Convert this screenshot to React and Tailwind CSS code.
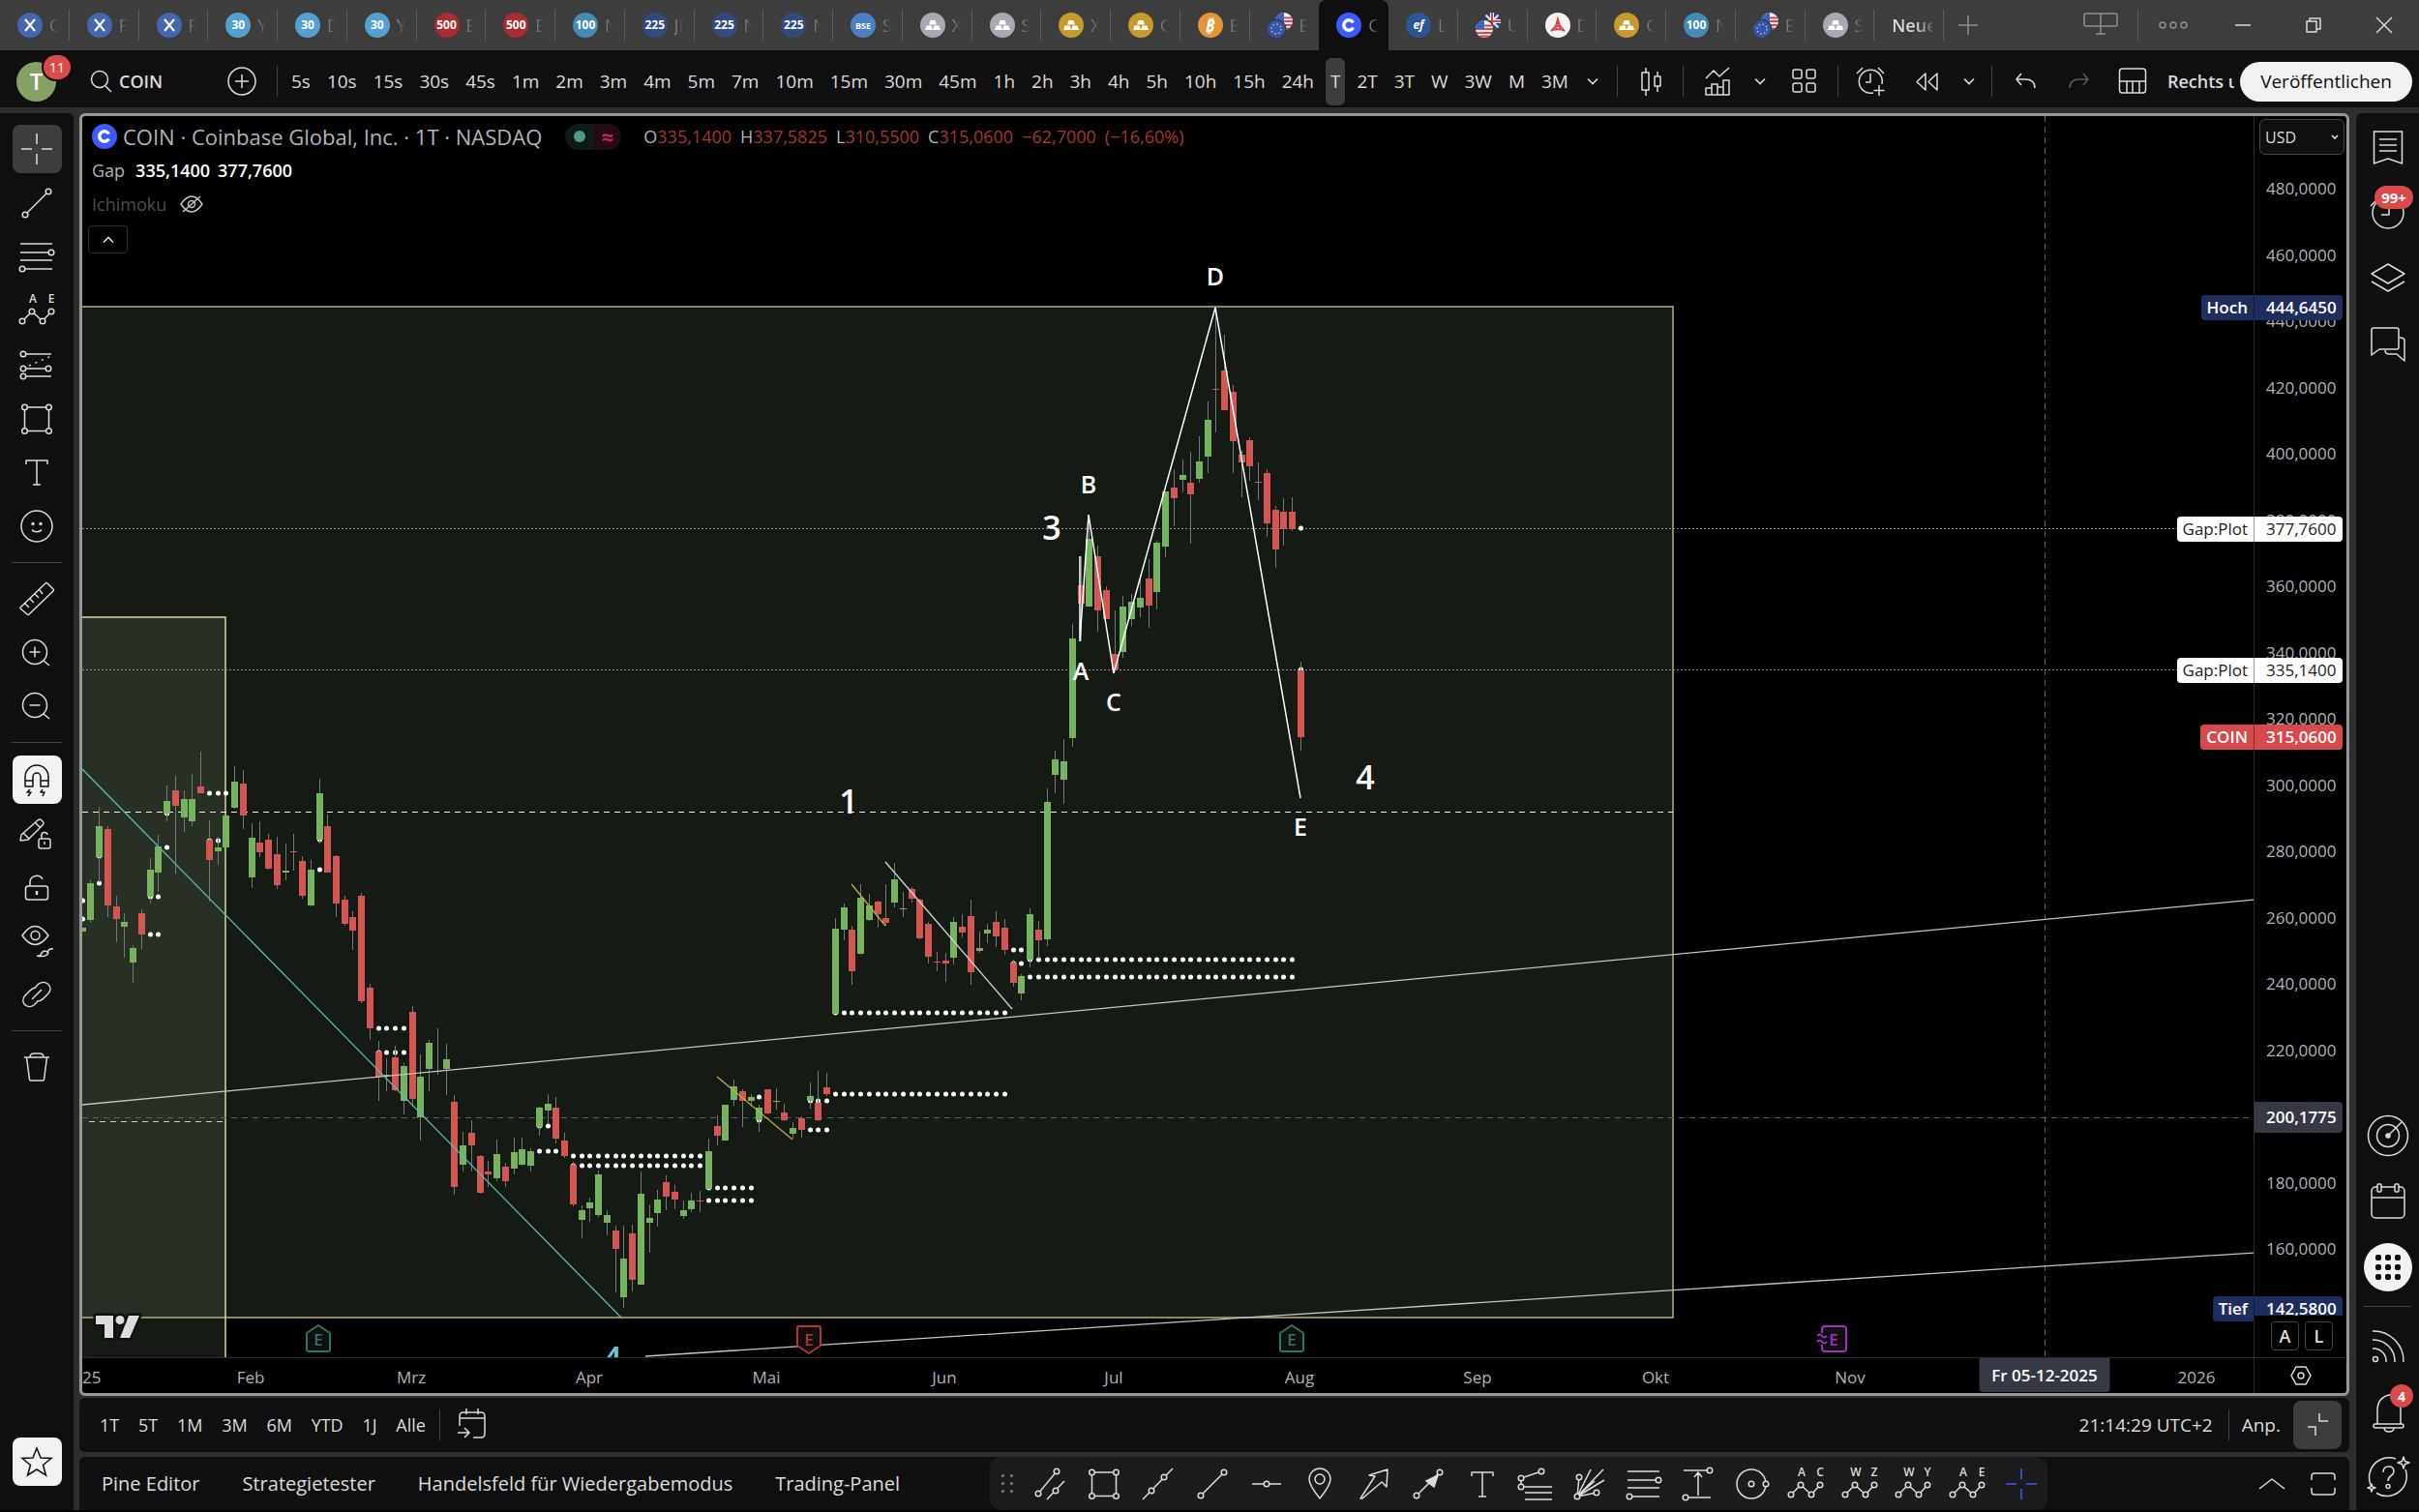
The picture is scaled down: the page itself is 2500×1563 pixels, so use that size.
import React from "react";

const tabs = [
  { icon: "x", label: "COIN" },
  { icon: "x", label: "FX" },
  { icon: "x", label: "FX" },
  { icon: "30", label: "YM" },
  { icon: "30", label: "DJI" },
  { icon: "30", label: "YM" },
  { icon: "500", label: "ES" },
  { icon: "500", label: "ES" },
  { icon: "100", label: "NQ" },
  { icon: "225", label: "JP" },
  { icon: "225", label: "NK" },
  { icon: "225", label: "NK" },
  { icon: "BSE", label: "SX" },
  { icon: "silver", label: "XAG" },
  { icon: "silver", label: "SI" },
  { icon: "gold", label: "XAU" },
  { icon: "gold", label: "GC" },
  { icon: "btc", label: "BTC" },
  { icon: "eu", label: "EUR" },
  { icon: "coin", label: "COIN", active: true },
  { icon: "ef", label: "LEU" },
  { icon: "uk", label: "USD" },
  { icon: "tri", label: "DX" },
  { icon: "gold", label: "GC" },
  { icon: "100", label: "NQ" },
  { icon: "eu", label: "EUR" },
  { icon: "silver", label: "SI" },
];

const intervals = [
  "5s", "10s", "15s", "30s", "45s", "1m", "2m", "3m", "4m", "5m", "7m", "10m", "15m", "30m", "45m",
  "1h", "2h", "3h", "4h", "5h", "10h", "15h", "24h", "T", "2T", "3T", "W", "3W", "M", "3M",
];

const ranges = ["1T", "5T", "1M", "3M", "6M", "YTD", "1J", "Alle"];

const months = [
  ["2025", 0], ["Feb", 174], ["Mrz", 340], ["Apr", 524], ["Mai", 707], ["Jun", 891], ["Jul", 1066],
  ["Aug", 1258], ["Sep", 1442], ["Okt", 1626], ["Nov", 1827], ["2026", 2185],
];

const ticks = [480, 460, 440, 420, 400, 380, 360, 340, 320, 300, 280, 260, 240, 220, 180, 160];

// price to pixels from the top of the plot
const priceY = (price) => Math.round(76 + (480 - price) * 3.426);
const barX = (i) => Math.round(93.4 + i * 8.745);

// Each block keeps its own origin and resolution: [high, top, bottom, low, rising]
const blocks = [
  {
    first: -1,
    origin: 740,
    scale: 2.3758,
    bars: [
      [520, 521, 529, 530, 1],
      [405, 411, 502, 509, 1], [223, 272, 346, 408, 1], [272, 279, 465, 495, 0], [442, 468, 500, 556, 0],
      [484, 507, 518, 595, 1], [564, 570, 606, 656, 1], [475, 485, 537, 572, 0], [349, 377, 445, 461, 1],
      [293, 321, 385, 432, 1], [170, 210, 240, 258, 1], [147, 184, 221, 387, 0], [182, 205, 250, 284, 1],
      [143, 205, 258, 270, 1], [87, 173, 190, 190, 0], [257, 304, 353, 455, 0], [296, 322, 332, 367, 1],
      [245, 245, 323, 323, 1], [124, 162, 226, 228, 1], [133, 166, 244, 277, 0], [263, 300, 396, 424, 1],
      [259, 312, 334, 347, 0], [289, 305, 376, 378, 0], [297, 340, 416, 426, 0], [314, 380, 385, 403, 1],
      [291, 333, 334, 379, 0], [345, 356, 443, 450, 0], [354, 377, 465, 469, 1], [154, 189, 305, 313, 1],
      [242, 271, 384, 384, 0], [342, 345, 461, 493, 0], [443, 452, 511, 516, 0], [479, 493, 527, 576, 0],
      [435, 442, 702, 705, 0], [658, 668, 768, 795, 0], [799, 824, 886, 945, 0], [840, 882, 884, 922, 1],
      [810, 839, 919, 922, 0], [852, 860, 945, 978, 1], [713, 726, 940, 960, 0], [832, 885, 985, 1043, 1],
      [797, 804, 866, 922, 1], [768, 871, 872, 881, 0], [806, 843, 866, 931, 1], [931, 947, 1156, 1175, 0],
      [1022, 1055, 1102, 1120, 1], [992, 1024, 1056, 1119, 0], [1078, 1081, 1172, 1174, 0], [1093, 1119, 1126, 1158, 0],
      [1041, 1076, 1135, 1142, 1], [1098, 1108, 1142, 1158, 0], [1037, 1072, 1112, 1126, 1], [1037, 1065, 1102, 1105, 1],
      [1062, 1069, 1105, 1119, 1], [961, 963, 1010, 1030, 1], [930, 953, 970, 1000, 1], [937, 963, 1038, 1050, 0],
      [1025, 1044, 1081, 1086, 0], [1095, 1103, 1200, 1205, 0], [1202, 1213, 1237, 1284, 1], [1183, 1194, 1209, 1243, 1],
      [1116, 1125, 1227, 1230, 1], [1215, 1225, 1244, 1275, 1], [1253, 1264, 1309, 1417, 0], [1252, 1333, 1428, 1453, 1],
      [1250, 1272, 1384, 1414, 0], [1118, 1174, 1396, 1397, 1], [1199, 1234, 1244, 1319, 1], [1165, 1187, 1221, 1254, 1],
      [1129, 1146, 1180, 1214, 0], [1152, 1169, 1187, 1212, 0],
    ],
  },
  {
    first: 70,
    origin: 780,
    scale: 3,
    bars: [
      [1384, 1412, 1430, 1440, 1], [1358, 1383, 1409, 1418, 1], [1353, 1383, 1385, 1420, 0], [1191, 1230, 1348, 1348, 1],
      [1118, 1151, 1182, 1212, 0], [1085, 1087, 1196, 1197, 1], [1007, 1028, 1070, 1089, 1], [1037, 1043, 1073, 1154, 0],
      [1052, 1063, 1073, 1092, 1], [1085, 1096, 1133, 1170, 1], [1037, 1039, 1114, 1116, 0], [1034, 1075, 1076, 1101, 1],
      [1083, 1110, 1134, 1138, 0], [1140, 1159, 1175, 1190, 1], [1122, 1128, 1164, 1187, 0], [1018, 1060, 1073, 1098, 1],
      [981, 1080, 1135, 1138, 0], [986, 1033, 1053, 1060, 0], [506, 541, 803, 803, 1], [462, 474, 543, 575, 1],
      [532, 544, 672, 713, 0], [403, 444, 617, 622, 1], [433, 469, 514, 515, 1], [453, 457, 496, 537, 0],
      [403, 506, 522, 530, 0], [337, 386, 458, 473, 1], [427, 477, 479, 505, 1], [410, 418, 446, 460, 0],
      [447, 451, 569, 572, 0], [519, 524, 626, 647, 0], [612, 643, 645, 671, 0], [615, 639, 649, 705, 0],
      [503, 520, 630, 651, 1], [494, 535, 551, 567, 0], [451, 500, 674, 713, 0], [549, 600, 608, 614, 1],
      [526, 544, 555, 586, 1], [486, 520, 563, 597, 0], [511, 538, 607, 622, 0], [636, 646, 707, 721, 0],
      [682, 688, 742, 763, 1], [477, 494, 637, 660, 1], [516, 544, 575, 634, 0], [105, 146, 572, 593, 1],
    ],
  },
  {
    first: 114,
    origin: 260,
    scale: 2.529,
    bars: [
      [1304, 1327, 1367, 1415, 1], [1274, 1332, 1382, 1444, 1], [973, 1011, 1273, 1294, 1], [797, 873, 921, 1020, 0],
      [690, 750, 927, 927, 1], [770, 796, 937, 993, 0], [875, 885, 962, 962, 0], [937, 1053, 1093, 1093, 0],
      [901, 927, 1048, 1062, 1], [896, 915, 962, 978, 1], [845, 905, 931, 956, 1], [803, 856, 925, 984, 0],
      [755, 760, 891, 936, 1], [628, 628, 772, 800, 1], [570, 618, 646, 718, 0], [544, 583, 598, 629, 1],
      [524, 605, 636, 765, 0], [482, 548, 594, 604, 1], [392, 440, 535, 580, 1], [150, 360, 361, 474, 0],
      [217, 312, 414, 414, 0], [350, 366, 495, 580, 0], [520, 532, 552, 642, 0], [486, 494, 561, 600, 0],
      [552, 603, 604, 650, 0], [570, 579, 711, 746, 0], [664, 675, 779, 827, 0], [646, 680, 727, 768, 0],
      [642, 680, 725, 731, 0], [1072, 1094, 1270, 1306, 0],
    ],
  },
];

// [first bar, last bar, y]
const gapDots = [
  [-1, -1, 931], [-1, -1, 950], [1, 1, 885], [1, 1, 913], [7, 8, 927], [7, 8, 966], [9, 9, 841], [9, 9, 876],
  [14, 16, 820], [14, 15, 869], [27, 27, 868], [27, 27, 899], [34, 37, 1063], [34, 37, 1088], [53, 54, 1164],
  [53, 55, 1190], [57, 72, 1195], [57, 72, 1205], [73, 78, 1228], [73, 78, 1241], [79, 79, 1134], [79, 79, 1158],
  [85, 87, 1138], [85, 87, 1168], [88, 108, 1131], [88, 108, 1047], [109, 110, 982], [109, 110, 996],
  [111, 142, 992], [111, 142, 1010], [143, 143, 546], [143, 143, 692],
];

function Icon({ children, className = "" }) {
  return (
    <svg
      viewBox="0 0 42 42"
      className={`size-[42px] shrink-0 overflow-visible ${className}`}
      stroke="currentColor"
      strokeWidth="1.5"
      aria-hidden="true"
    >
      {children}
    </svg>
  );
}

function P({ d, ...rest }) {
  return <path d={d} fill="none" strokeLinejoin="round" {...rest} />;
}

function Nodes({ at, r = 2.8 }) {
  return at.map(([x, y]) => <circle key={`${x}-${y}`} cx={x} cy={y} r={r} />);
}

function Wave({ a, b }) {
  return (
    <Icon>
      <text x="17" y="13" textAnchor="middle" stroke="none" className="fill-[#dbdbdb] text-[12px] font-semibold">{a}</text>
      <text x="36" y="13" textAnchor="middle" stroke="none" className="fill-[#dbdbdb] text-[12px] font-semibold">{b}</text>
      <P d="M6 32L16 22L27 32L36 22" />
      <Nodes at={[[6, 32], [16, 22], [27, 32], [36, 22]]} />
    </Icon>
  );
}

const Chevron = () => (
  <svg viewBox="0 0 12 8" className="w-3 h-2" fill="none" stroke="currentColor" strokeWidth="1.6" aria-hidden="true">
    <path d="M1 1.5l5 5 5-5" />
  </svg>
);

const CrossIcon = () => <Icon><P d="M21 5v11M21 26v11M5 21h11M26 21h11" /></Icon>;
const LineIcon = () => <Icon><P d="M9 33L33 9" /><Nodes at={[[9, 33], [33, 9]]} /></Icon>;
const FibIcon = () => (
  <Icon>
    <P d="M4 8h33M4 17h33M4 25h33M4 34h33" />
    <Nodes at={[[36, 17], [6, 34]]} />
  </Icon>
);
const ForecastIcon = () => (
  <Icon>
    <P d="M7 10h29M7 25h26M7 33h29" />
    <P d="M13 22L36 12" strokeDasharray="2 5" />
    <Nodes at={[[7, 10], [7, 25], [33, 25], [7, 33]]} />
  </Icon>
);
const RectIcon = () => (
  <Icon>
    <P d="M8.500 9h25v24.500h-25z" />
    <Nodes at={[[8.5, 9], [33.5, 9], [33.5, 33.5], [8.5, 33.5]]} />
  </Icon>
);
const TextIcon = () => <Icon><P d="M10 13V9h22v4M21 9v25M17 34h8" /></Icon>;

const drawTools = [
  { name: "Fadenkreuz", icon: <CrossIcon />, selected: true },
  { name: "Trendlinie", icon: <LineIcon /> },
  { name: "Fibonacci", icon: <FibIcon /> },
  { name: "Muster", icon: <Wave a="A" b="E" /> },
  { name: "Prognose", icon: <ForecastIcon /> },
  { name: "Rechteck", icon: <RectIcon /> },
  { name: "Text", icon: <TextIcon /> },
  {
    name: "Symbole",
    icon: (
      <Icon>
        <circle cx="21" cy="21" r="16" />
        <circle cx="17" cy="18.500" r="1" fill="currentColor" />
        <circle cx="25" cy="18.500" r="1" fill="currentColor" />
        <P d="M16 24.500c2 3 8 3 10 0" />
      </Icon>
    ),
  },
];

const zoomTools = [
  {
    name: "Messen",
    icon: <Icon><P d="M4 30L30 5q1-1 2 0l6 6q1 1 0 2L13 37q-1 1-2 0l-7-6zM9 26l4 4M14 21l4 4M19 16l4 4M24 12l3 4" /></Icon>,
  },
  { name: "Vergrößern", icon: <Icon><circle cx="19" cy="21" r="12.500" /><P d="M28 30l6 5M19 15.500v11M13.500 21h11" /></Icon> },
  { name: "Verkleinern", icon: <Icon><circle cx="19" cy="21" r="12.500" /><P d="M28 30l6 5M13.500 21h11" /></Icon> },
];

const modeTools = [
  {
    name: "Magnet",
    lit: true,
    icon: (
      <Icon>
        <P d="M9 28V18a12 12 0 0 1 24 0v10h-8V18a4 4 0 0 0-8 0v10zM9 22h8M25 22h8M14 31l-3 3h4l-3 4M27 31l-2 3h4l-2 4" />
      </Icon>
    ),
  },
  {
    name: "Zeichenmodus",
    icon: (
      <Icon>
        <P d="M5 22L22 7q2-2 4 0l1 1q2 2 0 4L12 27l-8 1zM19 9l6 6M7 20l6 6" />
        <rect x="23" y="26" width="12" height="10" rx="2" />
        <P d="M26 26v-3a3 3 0 0 1 6-1M29 29v3" />
      </Icon>
    ),
  },
  { name: "Sperren", icon: <Icon><rect x="9.500" y="20" width="23" height="14" rx="2.500" /><P d="M14 20v-5a7 7 0 0 1 13-2" /><P d="M21 25v4" strokeWidth="2.500" /></Icon> },
  {
    name: "Ausblenden",
    icon: (
      <Icon>
        <P d="M6 15q13-19 27 0q-14 19-27 0z" />
        <circle cx="19.500" cy="15" r="4.500" />
        <P d="M21 36q4 1 5-3q3-4 7 0q-2 5-12 3M32 32q2-4 6-3" />
      </Icon>
    ),
  },
  {
    name: "Verknüpfen",
    icon: (
      <Icon>
        <P d="M19 14l4-4c7-5 16 3 10 10l-5 5q-3 3-7 3M22 28l-4 4c-7 5-15-3-9-10l5-5q3-3 6-3M16 26L26 16" />
      </Icon>
    ),
  },
];

const favorites = [
  { name: "Paralleler Kanal", icon: <Icon><P d="M8 31L27 8M17 37L35 18" /><Nodes at={[[8, 31], [27, 8], [26, 28]]} /></Icon> },
  { name: "Rechteck", icon: <RectIcon /> },
  { name: "Erweiterte Linie", icon: <Icon><P d="M5 37L36 5" /><Nodes at={[[14, 28], [27, 14]]} /></Icon> },
  { name: "Trendlinie", icon: <LineIcon /> },
  { name: "Horizontale Linie", icon: <Icon><P d="M6 21h30" /><Nodes at={[[21, 21]]} /></Icon> },
  { name: "Notiz", icon: <Icon><P d="M21 36C13 26 10 21 10 16a11 11 0 0 1 22 0c0 5-3 10-11 20z" /><circle cx="21" cy="16" r="5" /></Icon> },
  { name: "Pfeil", icon: <Icon><P d="M7 36L22 13l-6-1L35 6l-1 18-5-5L9 36z" /></Icon> },
  { name: "Pfeillinie", icon: <Icon><P d="M9 33L33 9" /><path d="M31 12l-4 12-8-6z" fill="currentColor" /><Nodes at={[[9, 33], [33, 9]]} /></Icon> },
  { name: "Text", icon: <TextIcon /> },
  { name: "Fib-Erweiterung", icon: <Icon><P d="M6 15L27 8M6 15v9M6 24h32M10 30h28M10 37h28" /><Nodes at={[[27, 8], [6, 15], [6, 24]]} /></Icon> },
  { name: "Fib-Fächer", icon: <Icon><P d="M8 34L10 14M8 34L22 6M8 34L35 6M8 34L36 17M8 34l20-4M8 34l18-16" /><Nodes at={[[8, 34], [10, 14], [28, 30]]} /></Icon> },
  { name: "Fibonacci", icon: <FibIcon /> },
  { name: "Preisspanne", icon: <Icon><P d="M6 7h26M8 35h26M21 33V10M17 14l4-5 4 5" /><Nodes at={[[33, 7], [8, 35]]} /></Icon> },
  { name: "Kreis", icon: <Icon><circle cx="21" cy="21" r="15" /><Nodes at={[[21, 21], [36, 21]]} /></Icon> },
  { name: "Elliott ABC", icon: <Wave a="A" b="C" /> },
  { name: "Elliott WXYXZ", icon: <Wave a="W" b="Z" /> },
  { name: "Elliott WXY", icon: <Wave a="W" b="Y" /> },
  { name: "Elliott ABCDE", icon: <Wave a="A" b="E" /> },
];

const chips = {
  x: "bg-[#4467ad]",
  30: "bg-[#54a0d3]",
  500: "bg-[#a92c31]",
  100: "bg-[#468bb5]",
  225: "bg-[#2f4b80]",
  BSE: "bg-[#4c7fc4]",
  silver: "bg-[#a9a9b4]",
  gold: "bg-[#c79a2c]",
  btc: "bg-[#e39537]",
  coin: "bg-[#3d5afe]",
  ef: "bg-[#2c5796]",
  tri: "bg-[#f2f2f2]",
};

function PairIcon({ kind }) {
  const union = (
    <g>
      <circle r="9" fill="#2f55b8" />
      <circle r="5" fill="none" stroke="#e8c63c" strokeWidth="1.5" strokeDasharray="1.5 2.4" />
    </g>
  );
  const states = (
    <g>
      <circle r="9" fill="#f1f1f1" />
      <path d="M-8-3.500H8M-9 0H9M-8 4H8M-5 7.500H5" stroke="#d64a52" strokeWidth="1.800" />
      <path d="M0 0V-9A9 9 0 0 0-9 0z" fill="#3b63c9" />
    </g>
  );
  const kingdom = (
    <g>
      <circle r="9" fill="#2b4698" />
      <path d="M-6.500-6.500L6.500 6.500M6.500-6.500L-6.500 6.500" stroke="#e9e9e9" strokeWidth="2" />
      <path d="M0-9V9M-9 0H9" stroke="#f1f1f1" strokeWidth="4" />
      <path d="M0-9V9M-9 0H9" stroke="#d0434b" strokeWidth="2" />
    </g>
  );
  return (
    <svg viewBox="0 0 26 26" className="size-[26px] shrink-0" aria-hidden="true">
      <g transform="translate(17 9)">{kind === "eu" ? states : kingdom}</g>
      <circle cx="9" cy="17" r="10.500" fill="#3d3d3d" />
      <g transform="translate(9 17)">{kind === "eu" ? union : states}</g>
    </svg>
  );
}

function Chip({ icon }) {
  if (icon === "eu" || icon === "uk") return <PairIcon kind={icon} />;
  return (
    <span className={`flex size-[26px] shrink-0 items-center justify-center rounded-full text-white ${chips[icon]}`}>
      {(icon === "silver" || icon === "gold") && (
        <svg viewBox="0 0 26 26" className="size-[26px]" fill="#fff" aria-hidden="true">
          <path d="M10.500 8h5l1.500 4.500H9zM6.500 13.500h5l1.500 4.500H5zM14.500 13.500h5l1.500 4.500h-8z" />
        </svg>
      )}
      {icon === "x" && (
        <svg viewBox="0 0 26 26" className="size-[26px]" stroke="#fff" strokeWidth="2" fill="none" aria-hidden="true">
          <path d="M8 7l10 12M18 7L8 19" />
        </svg>
      )}
      {icon === "coin" && (
        <svg viewBox="0 0 26 26" className="size-[26px]" stroke="#fff" strokeWidth="3.500" fill="none" aria-hidden="true">
          <path d="M17.500 10.500a5.200 5.200 0 1 0 0 5" />
        </svg>
      )}
      {icon === "tri" && (
        <svg viewBox="0 0 26 26" className="size-[26px]" stroke="#d0484c" strokeWidth="1.500" fill="none" aria-hidden="true">
          <path d="M13 6l2 7 5 6q-7-3-14 0l5-6zM13 6v7l-3 4h6l-3-4" />
        </svg>
      )}
      {icon === "btc" && <span className="text-[17px] font-bold italic leading-none">₿</span>}
      {icon === "ef" && <span className="text-[12px] font-bold italic leading-none">ef</span>}
      {icon === "BSE" && <span className="text-[9px] font-bold leading-none">BSE</span>}
      {icon === "30" && <span className="text-[12px] font-bold leading-none">30</span>}
      {["500", "100", "225"].includes(icon) && <span className="text-[12px] font-bold leading-none">{icon}</span>}
    </span>
  );
}

function TabBar() {
  return (
    <header className="flex h-[52px] shrink-0 bg-[#3d3d3d]">
      <nav className="flex min-w-0 flex-1" aria-label="Tabs">
        {tabs.map((tab, i) => (
          <a
            key={i}
            href="#"
            className={`relative flex min-w-0 flex-1 items-center gap-[7px] pl-[18px] pr-3 ${tab.active ? "rounded-t-lg bg-[#0f0f0f]" : ""}`}
          >
            <Chip icon={tab.icon} />
            <span className="min-w-0 overflow-hidden whitespace-nowrap bg-gradient-to-r from-[#8f8f8f] to-[#3d3d3d] bg-clip-text text-[18px] text-transparent">
              {tab.label}
            </span>
            {!tab.active && !(tabs[i + 1] && tabs[i + 1].active) && (
              <span className="absolute right-0 top-[10px] h-8 w-px bg-[#5c5c5c]" />
            )}
          </a>
        ))}
        <a href="#" className="relative flex min-w-0 flex-1 items-center pl-[18px] pr-3">
          <span className="overflow-hidden whitespace-nowrap bg-gradient-to-r from-[#dbdbdb] from-60% to-[#5c5c5c] bg-clip-text text-[18px] font-semibold text-transparent">
            Neuer Tab
          </span>
          <span className="absolute right-0 top-[10px] h-8 w-px bg-[#5c5c5c]" />
        </a>
      </nav>
      <div className="flex w-[491px] shrink-0 items-center text-[#8f8f8f]">
        <button aria-label="Neuer Tab" className="flex w-[50px] justify-center">
          <Icon><P d="M21 11v20M11 21h20" /></Icon>
        </button>
        <button aria-label="Bildschirme" className="ml-[74px] flex w-[76px] justify-center">
          <Icon><rect x="4" y="9" width="34" height="13" rx="2" fill="none" /><P d="M21 9v21M16 30h10" /></Icon>
        </button>
        <span className="h-8 w-px bg-[#5c5c5c]" />
        <button aria-label="Menü" className="flex flex-1 justify-center">
          <Icon><g fill="none"><circle cx="10" cy="21" r="3" /><circle cx="21" cy="21" r="3" /><circle cx="32" cy="21" r="3" /></g></Icon>
        </button>
        <button aria-label="Minimieren" className="flex w-[73px] justify-center text-[#dbdbdb]">
          <Icon><P d="M13 21h16" /></Icon>
        </button>
        <button aria-label="Verkleinern" className="flex w-[73px] justify-center text-[#dbdbdb]">
          <Icon><P d="M14 17h10v11H14zM17 17v-3h11v11h-4" /></Icon>
        </button>
        <button aria-label="Schließen" className="flex w-[73px] justify-center text-[#dbdbdb]">
          <Icon><P d="M13 13l16 16M29 13L13 29" /></Icon>
        </button>
      </div>
    </header>
  );
}

const Bar = () => <span className="h-8 w-px shrink-0 bg-[#434343]" />;

function Toolbar() {
  return (
    <div className="flex h-[59px] shrink-0 items-center bg-[#0f0f0f] fill-[#0f0f0f] pt-[5px] text-[19px] text-[#dbdbdb]">
      <div className="flex w-[296px] shrink-0 items-center">
        <button aria-label="Profil" className="relative ml-[17px] flex size-[41px] items-center justify-center rounded-full bg-[#85a165] text-[24px] font-semibold text-white">
          T
          <span className="absolute -right-[15px] -top-[7px] flex h-[25px] w-[28px] items-center justify-center rounded-full bg-[#da4a4a] text-[14px] font-medium ring-2 ring-[#0f0f0f]">
            11
          </span>
        </button>
        <button className="ml-[25px] flex w-[146px] items-center font-semibold">
          <Icon><circle cx="20" cy="19" r="8.500" /><P d="M26 26l6 6" /></Icon>
          <span className="-ml-[2px] text-[18px]">COIN</span>
        </button>
        <button aria-label="Symbol hinzufügen">
          <Icon><circle cx="21" cy="21" r="14" /><P d="M21 14v14M14 21h14" /></Icon>
        </button>
        <span className="flex-1" />
        <Bar />
        <span className="w-[9px]" />
      </div>
      <div className="flex min-w-0 flex-1 items-center justify-between">
        {intervals.map((label) => (
          <button
            key={label}
            className={`h-[49px] rounded-md px-[5px] ${label === "T" ? "bg-[#3d3d3d]" : ""}`}
          >
            {label}
          </button>
        ))}
      </div>
      <div className="flex shrink-0 items-center">
        <button aria-label="Intervalle" className="mr-[5px] flex w-10 justify-center"><Chevron /></button>
        <Bar />
        <button aria-label="Kerzen" className="flex w-[67px] justify-center">
          <Icon><P d="M16 7v5M16 30v6M12 12h7v18h-7zM28 11v5M28 26v6M25 16h6v10h-6z" /></Icon>
        </button>
        <Bar />
        <button aria-label="Indikatoren" className="flex w-[70px] justify-center">
          <Icon><P d="M9 35V28h6v7zM15 35V24h6v11zM21 35V27h6v8zM27 35V20h6v15zM9 18l8-8 6 6L33 7" /></Icon>
        </button>
        <button aria-label="Favoriten" className="flex w-[18px] justify-center"><Chevron /></button>
        <button aria-label="Vorlagen" className="flex w-[71px] justify-center">
          <Icon>
            <rect x="10" y="9" width="9" height="9" rx="2" />
            <rect x="24" y="9" width="9" height="9" rx="2" />
            <rect x="10" y="23" width="9" height="9" rx="2" />
            <rect x="24" y="23" width="9" height="9" rx="2" />
          </Icon>
        </button>
        <Bar />
        <button aria-label="Alarm" className="flex w-[66px] justify-center">
          <Icon><P d="M24 33a12 12 0 1 1 9-9M21 13v9h-5M7 13l6-6M35 13l-6-6M30 25v11M24.500 30.500h11" /></Icon>
        </button>
        <button aria-label="Replay" className="flex w-[49px] justify-center">
          <Icon><P d="M20 13v17l-9-8.500zM32 13v17l-9-8.500z" /></Icon>
        </button>
        <button aria-label="Replay-Optionen" className="mr-[3px] flex w-10 justify-center"><Chevron /></button>
        <Bar />
        <button aria-label="Rückgängig" className="flex w-[68px] justify-center">
          <Icon><P d="M17 13l-5 6 5 6M12 19h9q10 0 10 9" /></Icon>
        </button>
        <button aria-label="Wiederholen" className="flex w-[44px] justify-center text-[#5c5c5c]">
          <Icon><P d="M25 13l5 6-5 6M30 19h-9q-10 0-10 9" /></Icon>
        </button>
        <button className="flex w-[138px] items-center overflow-hidden whitespace-nowrap pl-3 font-semibold">
          <Icon><rect x="7.500" y="8" width="27" height="25" rx="3" /><P d="M7.500 21h27M15 21v12M21 21v12M28 21v12" /></Icon>
          <span className="ml-[15px] text-[18px]">Rechts unten</span>
        </button>
        <button className="ml-[6px] mr-[7px] h-[41px] w-[178px] rounded-full bg-[#f2f2f2] text-[19px] font-medium text-[#0f0f0f]">
          Veröffentlichen
        </button>
      </div>
    </div>
  );
}

function ToolButton({ tool }) {
  const tone = tool.lit
    ? "bg-[#f2f2f2] fill-[#f2f2f2] text-[#0f0f0f]"
    : tool.selected
      ? "bg-[#3d3d3d]"
      : "";
  return (
    <button
      aria-label={tool.name}
      className={`flex h-[50px] w-[51px] shrink-0 items-center justify-center rounded-lg ${tone}`}
    >
      {tool.icon}
    </button>
  );
}

function LeftBar() {
  return (
    <aside className="mr-[6px] flex w-[76px] shrink-0 flex-col items-center rounded-tr-md bg-[#0f0f0f] fill-[#0f0f0f] pb-[25px] pt-3 text-[#dbdbdb]">
      <div className="flex h-[440px] flex-col justify-between">
        {drawTools.map((tool) => <ToolButton key={tool.name} tool={tool} />)}
      </div>
      <hr className="my-3 w-[52px] border-[#434343]" />
      <div className="flex h-[160px] flex-col justify-between">
        {zoomTools.map((tool) => <ToolButton key={tool.name} tool={tool} />)}
      </div>
      <hr className="my-[13px] w-[52px] border-[#434343]" />
      <div className="flex h-[272px] flex-col justify-between">
        {modeTools.map((tool) => <ToolButton key={tool.name} tool={tool} />)}
      </div>
      <hr className="my-3 w-[52px] border-[#434343]" />
      <ToolButton
        tool={{
          name: "Löschen",
          icon: <Icon><P d="M8 11h26M14 11q0-4 4-4h6q4 0 4 4M10.500 11l3 23q0 1 1.500 1h12q1.500 0 1.500-1l3-23" /></Icon>,
        }}
      />
      <span className="flex-1" />
      <ToolButton
        tool={{
          name: "Favoriten",
          lit: true,
          icon: <Icon><P d="M21 7l4 10 11 .500-8.500 7 3 10.500-9.500-6-9.500 6 3-10.500L6 17.500 17 17z" strokeLinejoin="miter" /></Icon>,
        }}
      />
    </aside>
  );
}

function SideButton({ name, badge, children }) {
  return (
    <button aria-label={name} className="relative flex h-[68px] w-full items-center justify-center">
      {children}
      {badge}
    </button>
  );
}

function RightBar() {
  return (
    <aside className="ml-[7px] flex w-[65px] shrink-0 flex-col items-center rounded-tl-md bg-[#0f0f0f] fill-[#0f0f0f] text-[#dbdbdb]">
      <SideButton name="Watchlist">
        <Icon><P d="M6.500 6h29v33L21 34 6.500 39zM12 14h18M12 20h18M12 26h18" strokeLinejoin="miter" /></Icon>
      </SideButton>
      <SideButton
        name="Alarme"
        badge={<span className="absolute left-[19px] top-[7px] flex h-[24px] w-[40px] items-center justify-center rounded-full bg-[#da4a4a] text-[15px] font-bold text-white">99+</span>}
      >
        <Icon><circle cx="21" cy="22" r="16" /><P d="M22 15v9h-8M3 15l6-6" /></Icon>
      </SideButton>
      <SideButton name="Objektbaum">
        <Icon><P d="M21 7l17 10-17 10L4 17zM4 25l17 10 17-10" /></Icon>
      </SideButton>
      <SideButton name="Chats">
        <Icon><P d="M4 33V7q0-2 2-2h24q2 0 2 2v18q0 2-2 2H12zM18 28q0 4 4 4h8l8 7V18q0-3-5-3" /></Icon>
      </SideButton>
      <span className="flex-1" />
      <SideButton name="Screener">
        <Icon>
          <circle cx="21" cy="21" r="20.500" />
          <circle cx="21" cy="21" r="11.500" />
          <circle cx="21" cy="21" r="2" fill="currentColor" />
          <P d="M21 21L35 7" />
        </Icon>
      </SideButton>
      <SideButton name="Kalender">
        <Icon>
          <rect x="4" y="6" width="34" height="32" rx="4" />
          <P d="M4 17h34" />
          <rect x="10" y="3" width="4" height="8" rx="1" />
          <rect x="28" y="3" width="4" height="8" rx="1" />
        </Icon>
      </SideButton>
      <SideButton name="Mehr">
        <span className="flex size-[50px] items-center justify-center rounded-full bg-[#f2f2f2]">
          <svg viewBox="0 0 28 28" className="size-7" fill="#0f0f0f" aria-hidden="true">
            {[4, 14, 24].map((y) => [4, 14, 24].map((x) => <rect key={`${x}${y}`} x={x - 3} y={y - 3} width="6" height="6" rx="2" />))}
          </svg>
        </span>
      </SideButton>
      <hr className="my-[6px] w-[49px] border-[#434343]" />
      <SideButton name="Streams">
        <Icon><circle cx="8" cy="35" r="2.500" /><P d="M5 24a13 13 0 0 1 14 14M5 15a22 22 0 0 1 23 23M5 6a31 31 0 0 1 32 32" /></Icon>
      </SideButton>
      <SideButton
        name="Benachrichtigungen"
        badge={<span className="absolute left-[35px] top-[6px] flex size-[24px] items-center justify-center rounded-full bg-[#da4a4a] text-[14px] font-bold text-white">4</span>}
      >
        <Icon><P d="M10 34V20q0-13 12-16q12 3 12 16v14M8 34h27q2 0 2 2t-2 2H8q-2 0-2-2t2-2zM17 38q0 4 5 4t5-4" /></Icon>
      </SideButton>
      <SideButton name="Hilfe">
        <Icon>
          <P d="M29 2A20.500 20.500 0 0 0 3 29M9 37.500A20.500 20.500 0 0 0 39 13" />
          <P d="M16 16q0-6 5.500-6t5.500 5c0 5-6 4-6 10" />
          <circle cx="21" cy="30.500" r="2" />
          <P d="M37 0l1.500 4.500L43 6l-4.500 1.500L37 12l-1.500-4.500L31 6l4.500-1.500zM4 28l1 3 3 1-3 1-1 3-1-3-3-1 3-1z" />
        </Icon>
      </SideButton>
    </aside>
  );
}

function Candles() {
  return blocks.map((block) =>
    block.bars.map(([high, top, bottom, low, rising], n) => {
      const y = (v) => Math.round(block.origin + v / block.scale);
      const x = barX(block.first + n);
      return (
        <g key={block.first + n}>
          <rect x={x} y={y(high)} width="1" height={Math.max(1, y(low) - y(high))} fill="#74777a" />
          <rect
            x={x - 3}
            y={y(top)}
            width="7"
            height={Math.max(1, y(bottom) - y(top))}
            fill={rising ? "#76b35f" : "#d35652"}
          />
        </g>
      );
    })
  );
}

function Earnings({ x, y, color, shape }) {
  return (
    <g transform={`translate(${x} ${y})`}>
      <path d={shape} fill="#0f0f0f" stroke={color} strokeWidth="2" strokeLinejoin="round" />
      <text x="0" y="7" textAnchor="middle" fill={color} className="text-[17px] font-semibold">E</text>
    </g>
  );
}

const wave = [["A", 1117, 694], ["B", 1125, 501], ["C", 1151, 726], ["D", 1256, 286], ["E", 1344, 855]];
const counts = [["1", 877, 829], ["3", 1087, 546], ["4", 1411, 804]];
const up = "M-12-6L0-14L12-6V11Q12 13 10 13H-10Q-12 13-12 11z";
const down = "M-12-11Q-12-13-10-13H10Q12-13 12-11V7L0 15L-12 7z";

function Plot() {
  return (
    <svg className="absolute inset-0 size-full" role="img" aria-label="COIN Kerzenchart">
      <g transform="translate(-85 -120)">
        <rect x="60" y="317" width="1669" height="1045" fill="#9dba8f" fillOpacity="0.14" stroke="#b5b183" strokeWidth="1.500" />
        <rect x="60" y="638" width="173" height="800" fill="#9dba8f" fillOpacity="0.14" stroke="#d8d3a0" strokeWidth="1.500" />
        <g stroke="#8a8d92" strokeDasharray="2 2">
          <path d="M85 546.500H2330M85 692.500H2330" />
        </g>
        <path d="M85 839.500H1729" stroke="#f0f0f0" strokeDasharray="6 5" />
        <path d="M92 1159.500H233" stroke="#c9ccc4" strokeDasharray="6 5" />
        <path d="M85 1155.500H2330M2113.500 120V1403" stroke="#5a606c" strokeDasharray="6 5" />
        {gapDots.map(([from, to, y]) =>
          Array.from({ length: to - from + 1 }, (_, k) => (
            <circle key={`${from + k}-${y}`} cx={barX(from + k) + 0.5} cy={y} r="2.500" fill="#fff" />
          ))
        )}
        <Candles />
        <g fill="none" strokeWidth="1.300">
          <path d="M85 1142L2330 930M667 1402L2330 1295" stroke="#c4c6c2" />
          <path d="M85 795L643 1363" stroke="#5fb8b4" />
          <path d="M741 1113L819 1178M880 914L915 957" stroke="#c7ac3c" />
          <path d="M915 891L1046 1043" stroke="#d4d4d4" />
          <path d="M1116 575V663L1125 532L1151 696L1256 318L1344 825" stroke="#fff" strokeWidth="1.500" />
        </g>
        <g fill="#fff" textAnchor="middle">
          {wave.map(([label, x, y]) => (
            <text key={label} x={x} y={y + 9} className="text-[25px] font-semibold">{label}</text>
          ))}
          {counts.map(([label, x, y]) => (
            <text key={label} x={x} y={y + 12} className="text-[34px] font-semibold">{label}</text>
          ))}
        </g>
        <text x="633" y="1417" textAnchor="middle" fill="#6cc9d6" className="text-[34px] font-semibold">4</text>
        <Earnings x={329} y={1384} color="#2f7266" shape={up} />
        <Earnings x={836} y={1384} color="#b03438" shape={down} />
        <Earnings x={1335} y={1384} color="#2f7266" shape={up} />
        <Earnings x={1895} y={1384} color="#a030c8" shape="M-12-10Q-12-13-9-13H10Q13-13 13-10V10Q13 13 10 13H-9Q-12 13-12 10V6M-12-10V-6" />
        <path d="M1878 1381q3-3 5 0t5 0M1878 1387q3-3 5 0t5 0" stroke="#a030c8" strokeWidth="2" fill="none" />
        <g fill="#dcdcdc" stroke="#0f0f0f" strokeWidth="5" paintOrder="stroke" strokeLinejoin="round">
          <path d="M99 1360h18v23h-9v-14h-9z" />
          <path d="M133 1360h11l-10 23h-10z" />
          <circle cx="124" cy="1364.500" r="4.500" />
        </g>
      </g>
    </svg>
  );
}

function Legend() {
  return (
    <div className="absolute left-[6px] top-[4px] text-[18px] text-[#b2b2b8]">
      <div className="flex h-[34px] items-center pl-1">
        <Chip icon="coin" />
        <h1 className="ml-[6px] whitespace-nowrap text-[22px]">COIN · Coinbase Global, Inc. · 1T · NASDAQ</h1>
        <div className="ml-[24px] flex h-[27px] w-[58px] overflow-hidden rounded-full">
          <span className="flex flex-1 items-center justify-center bg-[#0d1a17]">
            <span className="size-3 rounded-full bg-[#4f9a86]" />
          </span>
          <span className="flex flex-1 items-center justify-center bg-[#240a12] text-[22px] font-bold text-[#b8285a]">≈</span>
        </div>
        <div className="ml-[23px] flex gap-[9px] whitespace-nowrap text-[#a83434]">
          <span><span className="text-[#b2b2b8]">O</span>335,1400</span>
          <span><span className="text-[#b2b2b8]">H</span>337,5825</span>
          <span><span className="text-[#b2b2b8]">L</span>310,5500</span>
          <span><span className="text-[#b2b2b8]">C</span>315,0600</span>
          <span>−62,7000</span>
          <span>(−16,60%)</span>
        </div>
      </div>
      <div className="flex h-[36px] items-center gap-[8px] pl-1">
        <span className="mr-[3px]">Gap</span>
        <span className="font-semibold text-white">335,1400</span>
        <span className="font-semibold text-white">377,7600</span>
      </div>
      <div className="flex h-[34px] items-center pl-1 text-[#4d4d4d]">
        Ichimoku
        <svg viewBox="0 0 24 20" className="ml-[14px] h-5 w-6" fill="none" stroke="#c4c4c4" strokeWidth="1.500" aria-hidden="true">
          <path d="M1 10q11-16 22 0q-11 16-22 0zM3 18L21 2" />
          <circle cx="12" cy="10" r="3.500" />
        </svg>
      </div>
      <button aria-label="Legende einklappen" className="mt-[5px] flex h-[29px] w-[41px] items-center justify-center rounded border border-[#303030] text-[#dbdbdb]">
        <span className="rotate-180"><Chevron /></span>
      </button>
    </div>
  );
}

function PriceTag({ name, price, tone, value }) {
  return (
    <div className={`absolute right-1 flex h-[26px] -translate-y-1/2 items-center rounded-sm pb-px ${tone}`} style={{ top: priceY(price) + 1 }}>
      <span className="px-[6px]">{name}</span>
      <span className="h-[26px] w-px bg-black/40" />
      <span className="w-[91px] pl-[12px]">{value}</span>
    </div>
  );
}

function PriceAxis() {
  return (
    <div className="relative w-[96px] shrink-0 border-l border-[#2b2b2b] text-[17px] text-[#b2b2b8]">
      {ticks.map((tick) => (
        <span key={tick} className="absolute left-[12px] -translate-y-1/2 leading-5" style={{ top: priceY(tick) - 1 }}>
          {tick},0000
        </span>
      ))}
      <PriceTag name="Hoch" price={444.645} value="444,6450" tone="bg-[#1f2d5e] font-semibold text-white" />
      <PriceTag name="Gap:Plot" price={377.76} value="377,7600" tone="bg-white text-[#1c1c1c]" />
      <PriceTag name="Gap:Plot" price={335.14} value="335,1400" tone="bg-white text-[#1c1c1c]" />
      <PriceTag name="COIN" price={315.06} value="315,0600" tone="bg-[#d84a4a] font-semibold text-white" />
      <PriceTag name="Tief" price={142.58} value="142,5800" tone="bg-[#1f2d5e] font-semibold text-white" />
      <span className="absolute left-0 flex h-8 w-[91px] -translate-y-1/2 items-center rounded-r-sm bg-[#363843] pb-px pl-[12px] font-semibold text-white" style={{ top: priceY(200.1775) }}>
        200,1775
      </span>
      <div className="absolute bottom-0 left-0 flex h-[43px] w-full gap-[6px] bg-black pl-[17px] pt-[6px] text-[18px] font-semibold text-[#dbdbdb]">
        <button className="h-[30px] w-[29px] rounded border border-[#434343] leading-7">A</button>
        <button className="h-[30px] w-[29px] rounded border border-[#434343] leading-7">L</button>
      </div>
      <div className="absolute right-[2px] top-[3px] flex items-center">
        <select aria-label="Währung" className="h-[37px] w-[88px] appearance-none rounded-md border border-[#434343] bg-[#0f0f0f] pl-[5px] text-[16px] text-[#dbdbdb]">
          <option>USD</option>
        </select>
        <span className="pointer-events-none absolute right-[6px] text-[#dbdbdb]">
          <svg viewBox="0 0 8 6" className="w-2" fill="none" stroke="currentColor" strokeWidth="1.600" aria-hidden="true">
            <path d="M1 1l3 3 3-3" />
          </svg>
        </span>
      </div>
    </div>
  );
}

function Chart() {
  return (
    <main className="flex min-h-0 flex-1 flex-col overflow-hidden rounded-md border-[3px] border-[#979797] bg-black">
      <div className="flex min-h-0 flex-1">
        <div className="relative min-w-0 flex-1 overflow-hidden">
          <Plot />
          <Legend />
        </div>
        <PriceAxis />
      </div>
      <div className="flex h-[37px] shrink-0 border-t border-[#2b2b2b] text-[17px] text-[#b2b2b8]">
        <div className="relative flex-1 overflow-hidden">
          {months.map(([label, x]) => (
            <span key={label} className="absolute top-[6px] -translate-x-1/2 leading-7" style={{ left: x }}>{label}</span>
          ))}
          <span className="absolute top-0 flex h-[35px] w-[135px] -translate-x-1/2 items-center justify-center rounded-b-sm bg-[#363843] font-semibold text-white" style={{ left: 2028 }}>
            Fr 05-12-2025
          </span>
        </div>
        <button aria-label="Skaleneinstellungen" className="flex w-[96px] items-center justify-center border-l border-[#2b2b2b] text-[#dbdbdb]">
          <svg viewBox="0 0 22 20" className="h-5 w-[22px]" fill="none" stroke="currentColor" strokeWidth="1.500" aria-hidden="true">
            <path d="M6 1h10l5 9-5 9H6l-5-9z" />
            <circle cx="11" cy="10" r="3" />
          </svg>
        </button>
      </div>
    </main>
  );
}

function RangeBar() {
  return (
    <div className="mt-[2px] flex h-[56px] shrink-0 items-center rounded-md bg-[#0f0f0f] fill-[#0f0f0f] pl-[21px] pr-2 text-[19px] text-[#dbdbdb]">
      <div className="flex w-[337px] justify-between text-[18px]">
        {ranges.map((label) => <button key={label}>{label}</button>)}
      </div>
      <span className="ml-[14px] h-8 w-px bg-[#434343]" />
      <button aria-label="Gehe zu" className="ml-3">
        <Icon><P d="M8 22V12q0-4 4-4h18q4 0 4 4v18q0 4-4 4h-8M8 14h26M15 4v6M27 4v6M6 29h12M13 24l5 5-5 5" /></Icon>
      </button>
      <span className="flex-1" />
      <button>21:14:29 UTC+2</button>
      <span className="ml-4 h-8 w-px bg-[#434343]" />
      <button className="mx-[13px]">Anp.</button>
      <button aria-label="Verkleinern" className="flex size-[50px] items-center justify-center rounded-lg bg-[#3d3d3d]">
        <Icon><P d="M23 9v8h9M11 23h8v9" /></Icon>
      </button>
    </div>
  );
}

function BottomBar() {
  return (
    <footer className="mt-[5px] flex h-[55px] shrink-0 items-center rounded-t-md bg-[#0f0f0f] pl-[23px] text-[#dbdbdb]">
      <div className="flex gap-[44px] whitespace-nowrap text-[20px]">
        <button>Pine Editor</button>
        <button>Strategietester</button>
        <button>Handelsfeld für Wiedergabemodus</button>
        <button>Trading-Panel</button>
      </div>
      <span className="flex-1" />
      <div className="flex h-full w-[1093px] shrink-0 items-center justify-between rounded-xl bg-[#1c1c1c] fill-[#1c1c1c] pl-3 pr-[6px]">
        <svg viewBox="0 0 12 20" className="mr-1 h-5 w-3 fill-[#6b6b6b]" aria-hidden="true">
          <path d="M0 0h3v3H0zM9 0h3v3H9zM0 8h3v3H0zM9 8h3v3H9zM0 16h3v3H0zM9 16h3v3H9z" />
        </svg>
        {favorites.map((tool) => (
          <button key={tool.name} aria-label={tool.name}>{tool.icon}</button>
        ))}
        <button aria-label="Fadenkreuz" className="text-[#3d5afe]"><CrossIcon /></button>
      </div>
      <div className="flex w-[312px] shrink-0 justify-end gap-[11px] pr-[6px]">
        <button aria-label="Öffnen"><Icon><P d="M8 26L21 16l13 10" /></Icon></button>
        <button aria-label="Maximieren">
          <Icon><P d="M9 17v-4q0-3 3-3h18q3 0 3 3v4M9 25v4q0 3 3 3h18q3 0 3-3v-4" /></Icon>
        </button>
      </div>
    </footer>
  );
}

export default function App() {
  return (
    <div className="flex h-screen w-full flex-col overflow-hidden bg-black pb-[2px] font-['Open_Sans','Noto_Sans',sans-serif]">
      <TabBar />
      <Toolbar />
      <div className="flex min-h-0 flex-1 bg-[#2e2e2e] pt-[6px]">
        <LeftBar />
        <div className="flex min-w-0 flex-1 flex-col">
          <Chart />
          <RangeBar />
          <BottomBar />
        </div>
        <RightBar />
      </div>
    </div>
  );
}
